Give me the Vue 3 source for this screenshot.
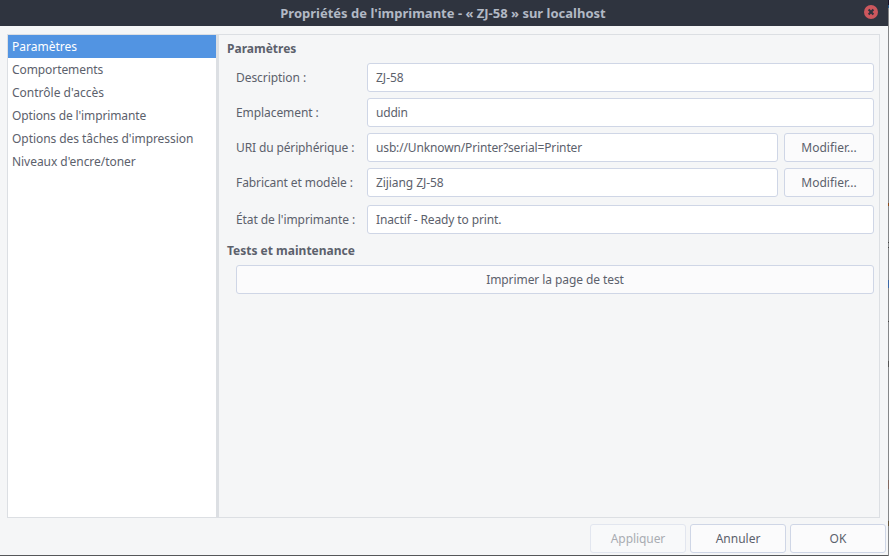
<script setup>
// "track" is the letter spacing in px that fits each string to its hinted width
const sections = [
  { text: 'Paramètres', track: 0 },
  { text: 'Comportements', track: -0.08 },
  { text: "Contrôle d'accès", track: 0 },
  { text: "Options de l'imprimante", track: -0.13 },
  { text: "Options des tâches d'impression", track: -0.06 },
  { text: "Niveaux d'encre/toner", track: -0.05 },
]
const fields = [
  { label: 'Description :', labelTrack: -0.06, value: 'ZJ-58', track: 0 },
  { label: 'Emplacement :', labelTrack: -0.08, value: 'uddin', track: -0.2 },
  { label: 'URI du périphérique :', labelTrack: -0.13, value: 'usb://Unknown/Printer?serial=Printer', track: -0.14, editable: true },
  { label: 'Fabricant et modèle :', labelTrack: -0.09, value: 'Zijiang ZJ-58', track: -0.08, editable: true },
  { label: "État de l'imprimante :", labelTrack: -0.08, value: 'Inactif - Ready to print.', track: -0.12, status: true },
]
const spacing = (px) => ({ letterSpacing: `${px}px` })
</script>

<template>
  <div class="desktop">
    <div class="window">
      <header class="titlebar">
        <span class="title">Propriétés de l'imprimante - « ZJ-58 » sur localhost</span>
        <svg class="close" viewBox="0 0 14 14" width="14" height="14">
          <circle cx="7" cy="7" r="7" fill="#cc575d" />
          <path d="M4.6 4.6L9.4 9.4M9.4 4.6L4.6 9.4" stroke="#2f343f" stroke-width="2.1" />
        </svg>
      </header>

      <main class="panes">
        <nav class="sidebar">
          <div
            v-for="(s, i) in sections"
            :key="s.text"
            class="item"
            :class="{ selected: i === 0 }"
            :style="spacing(s.track)"
          >{{ s.text }}</div>
        </nav>
        <section class="content">
          <h2>Paramètres</h2>
          <div class="form">
            <div v-for="f in fields" :key="f.label" class="row" :class="{ status: f.status }">
              <label :style="spacing(f.labelTrack)">{{ f.label }}</label>
              <div class="entry" :style="spacing(f.track)">{{ f.value }}</div>
              <button v-if="f.editable" class="btn edit">Modifier...</button>
            </div>
          </div>
          <h2 class="second">Tests et maintenance</h2>
          <button class="btn test">Imprimer la page de test</button>
        </section>
      </main>

      <footer class="actions">
        <button class="btn" disabled>Appliquer</button>
        <button class="btn">Annuler</button>
        <button class="btn">OK</button>
      </footer>
    </div>
  </div>
</template>

<style>
body { overflow: hidden; }
</style>

<style scoped>
* { box-sizing: border-box; }
.desktop {
  width: 889px;
  height: 556px;
  padding: 0 1px 1px 0;
  background:
    linear-gradient(#161025 0 5px, #285c8c 5px 8px, transparent 8px) right top / 1px 100% no-repeat,
    linear-gradient(transparent 203px, #8c4a1c 203px 206px, transparent 206px 242px, #444 242px 243px, transparent 243px 247px, #444 247px 248px, transparent 248px 280px, #3b67a5 280px 288px, transparent 288px 321px, #444 321px 322px, transparent 322px 361px, #555 361px 367px, transparent 367px 480px, #806860 480px 489px, transparent 489px 521px, #64543c 521px 526px, transparent 526px) right top / 1px 100% no-repeat,
    linear-gradient(#858789, #858789) right top / 1px 100% no-repeat,
    #555759;
  font-family: "Noto Sans", sans-serif;
  font-size: 12px;
  line-height: 17px;
  color: #5c616c;
}
.window {
  display: flex;
  flex-direction: column;
  height: 555px;
  background: #f5f6f7;
}
.titlebar {
  display: grid;
  grid-template-columns: 1fr 14px;
  align-items: center;
  flex: none;
  height: 26px;
  padding: 0 10px 0 22px;
  background: #2f343f;
}
.title {
  text-align: center;
  font-size: 13px;
  font-weight: 700;
  color: #b2b9c5;
}
.close { margin-top: -2px; }
.panes {
  display: flex;
  flex: none;
  height: 484px;
  margin: 8px 8px 0 7px;
  border: 1px solid #dcdfe3;
}
.sidebar {
  width: 211px;
  background: #fff;
  border-right: 3px solid #dcdfe3;
}
.item {
  height: 23px;
  padding: 3px 4px;
  white-space: nowrap;
}
.item.selected { background: #5294e2; color: #fff; }
.content {
  flex: 1;
  padding: 5px 5px 0 8px;
}
h2 {
  margin: 0;
  font-size: 12px;
  line-height: 17px;
  font-weight: 700;
}
.form {
  display: flex;
  flex-direction: column;
  gap: 6px;
  margin: 6px 0 0 9px;
}
.row {
  display: flex;
  align-items: center;
  height: 29px;
}
.row.status { margin-top: 2px; }
label { width: 131px; white-space: nowrap; }
.entry {
  flex: 1;
  height: 29px;
  padding: 5px 8px;
  background: #fff;
  border: 1px solid #cfd6e6;
  border-radius: 3px;
}
.btn {
  height: 29px;
  padding: 0;
  font: inherit;
  color: inherit;
  background: #fbfbfc;
  border: 1px solid #cfd6e6;
  border-radius: 3px;
}
.btn:disabled {
  color: #a9acb2;
  background: #f8f9fa;
  border-color: #e2e6ef;
  letter-spacing: -0.08px;
}
.edit { width: 90px; margin-left: 6px; }
.second { margin-top: 8px; }
.test {
  display: block;
  width: 638px;
  margin: 6px 0 0 9px;
  letter-spacing: -0.08px;
}
.actions {
  display: flex;
  justify-content: flex-end;
  gap: 4px;
  padding: 6px 2px 0 0;
}
.actions .btn { width: 96px; }
</style>
